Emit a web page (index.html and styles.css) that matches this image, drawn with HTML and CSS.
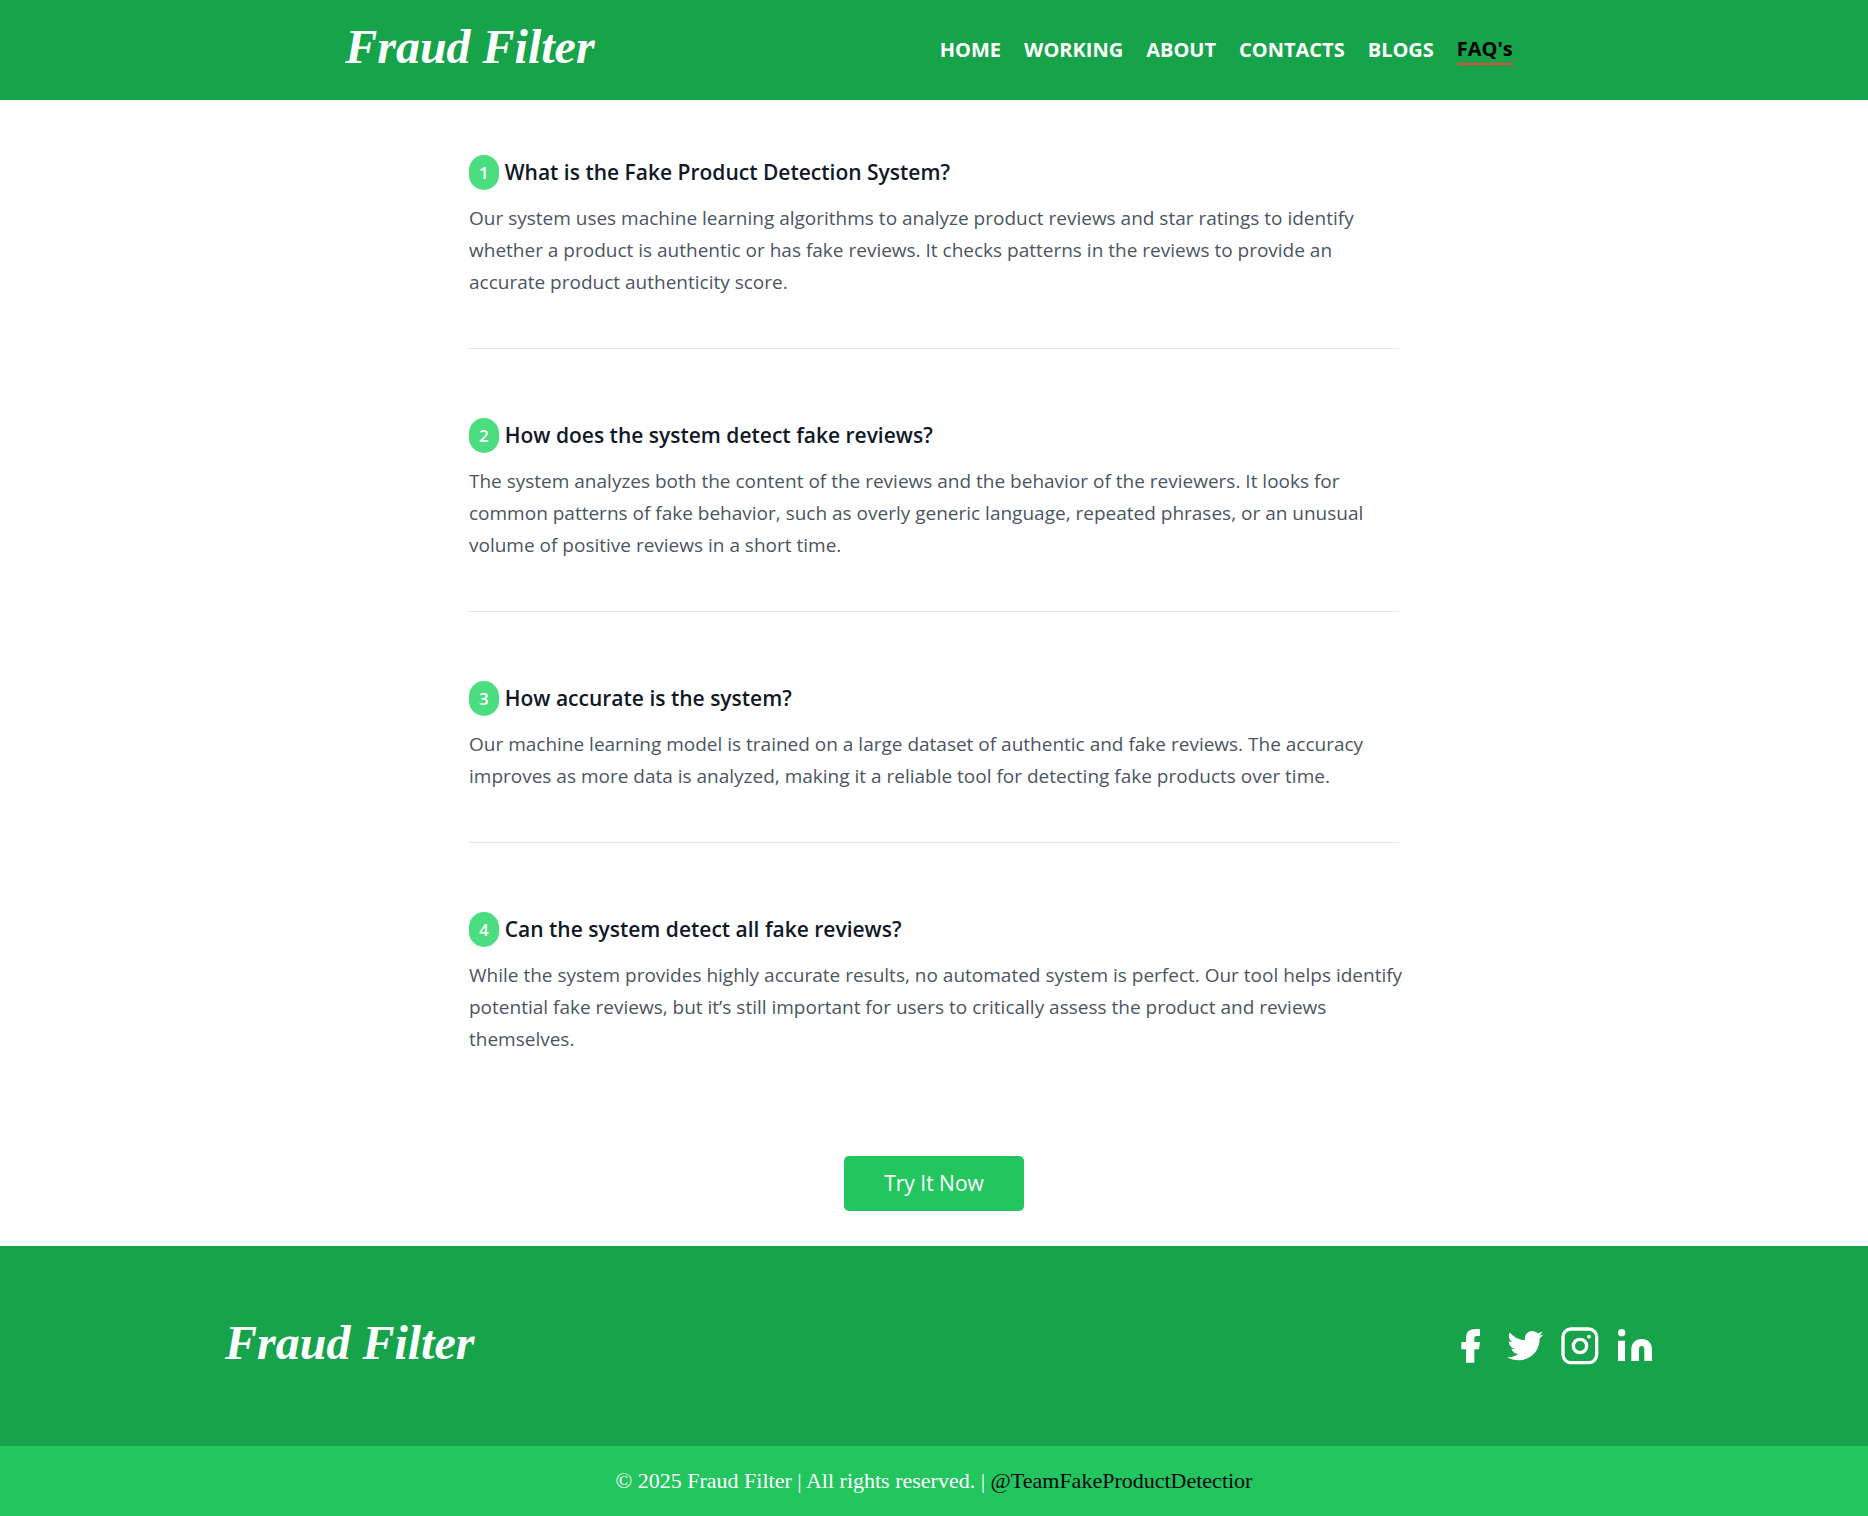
FILE: index.html
```html
<!DOCTYPE html>
<html lang="en">
<head>
<meta charset="utf-8">
<meta name="viewport" content="width=device-width, initial-scale=1">
<title>Fraud Filter - FAQ's</title>
<link rel="stylesheet" href="styles.css">
</head>
<body>
<header class="header">
  <a class="logo" href="#">Fraud Filter</a>
  <nav class="nav">
    <a class="nav-link" href="#">HOME</a>
    <a class="nav-link" href="#">WORKING</a>
    <a class="nav-link" href="#">ABOUT</a>
    <a class="nav-link" href="#">CONTACTS</a>
    <a class="nav-link" href="#">BLOGS</a>
    <a class="nav-link active" href="#" aria-current="page">FAQ's</a>
  </nav>
</header>

<main class="main">
  <section class="faq">
    <h2 class="question"><span class="badge">1</span>What is the Fake Product Detection System?</h2>
    <p class="answer">Our system uses machine learning algorithms to analyze product reviews and star ratings to identify whether a product is authentic or has fake reviews. It checks patterns in the reviews to provide an accurate product authenticity score.</p>
  </section>
  <section class="faq">
    <h2 class="question"><span class="badge">2</span>How does the system detect fake reviews?</h2>
    <p class="answer">The system analyzes both the content of the reviews and the behavior of the reviewers. It looks for common patterns of fake behavior, such as overly generic language, repeated phrases, or an unusual volume of positive reviews in a short time.</p>
  </section>
  <section class="faq">
    <h2 class="question"><span class="badge">3</span>How accurate is the system?</h2>
    <p class="answer">Our machine learning model is trained on a large dataset of authentic and fake reviews. The accuracy improves as more data is analyzed, making it a reliable tool for detecting fake products over time.</p>
  </section>
  <section class="faq">
    <h2 class="question"><span class="badge">4</span>Can the system detect all fake reviews?</h2>
    <p class="answer">While the system provides highly accurate results, no automated system is perfect. Our tool helps identify potential fake reviews, but it’s still important for users to critically assess the product and reviews themselves.</p>
  </section>
  <button class="cta" type="button">Try It Now</button>
</main>

<footer class="footer">
  <div class="footer-inner">
    <a class="logo" href="#">Fraud Filter</a>
    <div class="social">
      <a href="#" aria-label="Facebook"><svg class="icon" viewBox="0 0 120 120"><path d="M48 110V70H34V48H48V37C48 18 58 9 77 9H90V30H80Q73 30 73 37V48H90L87 70H73V110Z"/></svg></a>
      <a href="#" aria-label="Twitter"><svg class="icon" viewBox="0 0 120 120"><path transform="translate(7 5) scale(.211)" d="M459.37 151.716c.325 4.548.325 9.097.325 13.645 0 138.72-105.583 298.558-298.558 298.558-59.452 0-114.68-17.219-161.137-47.106 8.447.974 16.568 1.299 25.34 1.299 49.055 0 94.213-16.568 130.274-44.832-46.132-.975-84.792-31.188-98.112-72.772 6.498.974 12.995 1.624 19.818 1.624 9.421 0 18.843-1.3 27.614-3.573-48.081-9.747-84.143-51.98-84.143-102.985v-1.299c13.969 7.797 30.214 12.67 47.431 13.319-28.264-18.843-46.781-51.005-46.781-87.391 0-19.492 5.197-37.36 14.294-52.954 51.655 63.675 129.3 105.258 216.365 109.807-1.624-7.797-2.599-15.918-2.599-24.04 0-57.828 46.782-104.934 104.934-104.934 30.213 0 57.502 12.67 76.67 33.137 23.715-4.548 46.456-13.32 66.599-25.34-7.798 24.366-24.366 44.833-46.132 57.827 21.117-2.273 41.584-8.122 60.426-16.243-14.292 20.791-32.161 39.308-52.628 54.253z"/></svg></a>
      <a href="#" aria-label="Instagram"><svg class="icon" viewBox="0 0 120 120"><rect class="line" x="9" y="9" width="101" height="101" rx="24"/><circle class="line" cx="60" cy="60" r="20"/><circle cx="87" cy="32" r="5.500"/></svg></a>
      <a href="#" aria-label="LinkedIn"><svg class="icon" viewBox="0 0 120 120"><circle cx="20" cy="20" r="11"/><path d="M9 44H30V105H9ZM49 105V70C49 50 62 39 80 39S111 50 111 70V105H88V70Q88 60 80 60T72 70V105Z"/></svg></a>
    </div>
  </div>
</footer>
<div class="copyright">© 2025 Fraud Filter | All rights reserved. | <a class="team" href="#">@TeamFakeProductDetectior</a></div>
</body>
</html>
```

FILE: styles.css
```css
* {
  box-sizing: border-box;
}

body {
  margin: 0;
  background: #fff;
  font-family: "Segoe UI", "Open Sans", "Noto Sans", sans-serif;
}

a {
  color: inherit;
  text-decoration: none;
}

.header {
  display: flex;
  justify-content: space-evenly;
  align-items: center;
  min-height: 100px;
  padding-right: 10px;
  background: #16a34a;
  color: #fff;
}

.logo {
  padding-bottom: 6px;
  font-family: "Liberation Serif", serif;
  font-size: 48px;
  font-style: italic;
  font-weight: 700;
  line-height: 60px;
  white-space: nowrap;
}

.nav {
  display: flex;
  align-items: center;
  gap: 23px;
  font-size: 20px;
  font-weight: 700;
  line-height: 28px;
}

.active {
  border-bottom: 2px solid #ef4444;
  color: #000;
}

.main {
  display: flex;
  flex-direction: column;
  max-width: 970px;
  margin: 0 auto;
  padding: 55px 20px 35px;
}

.faq {
  padding: 69px 0 50px;
  border-bottom: 1px solid #e5e7eb;
}

.faq:first-child {
  padding-top: 0;
}

.faq:last-of-type {
  border-bottom: 0;
}

.question {
  display: flex;
  align-items: center;
  gap: 6px;
  margin: 0 0 12px;
  color: #111827;
  font-size: 21px;
  font-weight: 600;
  line-height: 35px;
}

.badge {
  padding: 0 10px;
  border-radius: 18px;
  background: #4ade80;
  color: #fff;
  font-size: 17px;
}

.answer {
  margin: 0 -10px 0 0;
  color: #4b5563;
  font-size: 19px;
  line-height: 32px;
}

.cta {
  align-self: center;
  margin-top: 51px;
  padding: 10px 40px;
  border: 0;
  border-radius: 5px;
  background: #22c55e;
  color: #fff;
  font-family: inherit;
  font-size: 21px;
  line-height: 35px;
}

.footer {
  background: #16a34a;
  color: #fff;
}

.footer-inner {
  display: flex;
  justify-content: space-between;
  align-items: center;
  max-width: 1442px;
  min-height: 200px;
  margin: 0 auto;
  padding-left: 12px;
}

.social {
  display: flex;
  gap: 15px;
}

.icon {
  display: block;
  width: 40px;
  height: 40px;
  fill: #fff;
}

.line {
  fill: none;
  stroke: #fff;
  stroke-width: 10;
}

.copyright {
  padding: 20px;
  background: #22c55e;
  color: #fff;
  font-family: Georgia, "Liberation Serif", serif;
  font-size: 22px;
  line-height: 30px;
  text-align: center;
}

.team {
  color: #030712;
}
```
